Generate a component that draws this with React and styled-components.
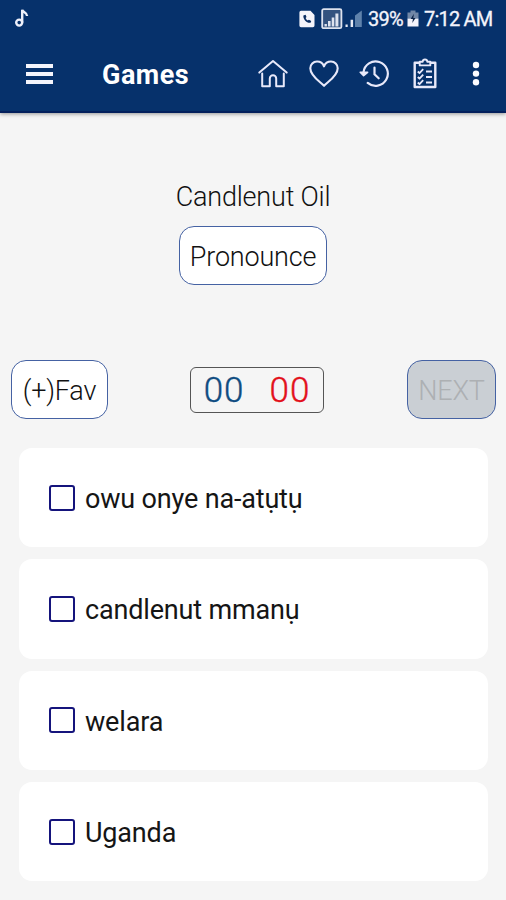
import React, { useState } from "react";
import styled, { createGlobalStyle } from "styled-components";

const options = ["owu onye na-atụtụ", "candlenut mmanụ", "welara", "Uganda"];

const App = () => {
    const [selected, setSelected] = useState(null);

    return (
        <Screen>
            <GlobalStyle />
            <Header>
                <StatusBar>
                    <NoteIcon />
                    <StatusGroup>
                        <CallIcon />
                        <SignalBoxIcon />
                        <SignalIcon />
                        <StatusText $width={34}>39%</StatusText>
                        <BatteryIcon />
                        <StatusText $width={68}>7:12 AM</StatusText>
                    </StatusGroup>
                </StatusBar>
                <Toolbar>
                    <MenuButton aria-label="Menu">
                        <MenuLine />
                        <MenuLine />
                        <MenuLine />
                    </MenuButton>
                    <Title>Games</Title>
                    <Actions>
                        <HomeIcon />
                        <HeartIcon />
                        <HistoryIcon />
                        <ClipboardIcon />
                        <DotsIcon />
                    </Actions>
                </Toolbar>
            </Header>
            <Question>
                <Word>Candlenut Oil</Word>
                <Button $width={148}>Pronounce</Button>
            </Question>
            <Controls>
                <Button $width={97}>(+)Fav</Button>
                <Score>
                    <Count $color="#0f4c81">00</Count>
                    <Count $color="#e3101b">00</Count>
                </Score>
                <Button $width={89} disabled>
                    NEXT
                </Button>
            </Controls>
            <Options>
                {options.map((option, index) => (
                    <Option key={option} onClick={() => setSelected(index)}>
                        <Checkbox $checked={selected === index} />
                        <Label>{option}</Label>
                    </Option>
                ))}
            </Options>
        </Screen>
    );
};

const NoteIcon = () => (
    <svg width="18" height="20" viewBox="0 0 18 20" fill="none" stroke="#eef0fa">
        <circle cx="6.2" cy="13.6" r="3" strokeWidth="2.4" />
        <path d="M9.2 13.6V.8c.6 2.8 4.8 2.3 4.9 6.2" strokeWidth="2.4" />
    </svg>
);

const CallIcon = () => (
    <svg width="16" height="18" viewBox="0 0 16 18">
        <path d="M2 .8h9.5L15.5 5v10.6a1.6 1.6 0 0 1-1.6 1.6H2A1.6 1.6 0 0 1 .4 15.6V2.4A1.6 1.6 0 0 1 2 .8z" fill="#f4f4fb" />
        <path
            d="M4.4 5.4c-.6 3.6 3.3 8 7.2 7.4l.6-1.9-2.3-1.2-1.1.9c-1.1-.6-1.8-1.4-2.2-2.5l.9-1-.9-2.3z"
            fill="#0a2d62"
        />
    </svg>
);

const SignalBoxIcon = () => (
    <svg width="22" height="22" viewBox="0 0 22 22">
        <rect x="1.2" y="1.2" width="19.2" height="19" rx="1.5" fill="#33527f" stroke="#dde2ee" strokeWidth="1.8" />
        <path d="M3.5 18.5V16h2.4v2.5zM7 18.5V13h2.6v5.5zM10.7 18.5v-9h2.6v9zM14.4 18.5v-13h3v13z" fill="#dde2ee" />
    </svg>
);

const SignalIcon = () => (
    <svg width="18" height="18" viewBox="0 0 18 18">
        <path d="M.5 17v-2.5h2.2V17zM5.6 17V9.8h2.5V17z" fill="#e6eaf4" />
        <path d="M10 17V5.5L16.8.5V17z" fill="#5f82ab" />
    </svg>
);

const BatteryIcon = () => (
    <svg width="12" height="17" viewBox="0 0 12 17">
        <path d="M3.5.5h5v2h3v6H.5v-6h3z" fill="#7187a6" />
        <path d="M.5 8.5h11v8H.5z" fill="#f4f4fb" />
        <path d="M6.9 3.8L3.7 9h2.2l-.6 4 3.2-5H6.3z" fill="#0b2347" />
    </svg>
);

const HomeIcon = () => (
    <svg width="32" height="32" viewBox="0 0 32 32" fill="none" stroke="#e8e9fa" strokeWidth="2" strokeLinecap="round" strokeLinejoin="round">
        <path d="M2.3 14.6L16 3l13.7 11.6" />
        <path d="M5.2 15.4v12.8h7.6v-7.800a3.2 3.2 0 0 1 6.4 0v7.800h7.600V15.4" />
    </svg>
);

const HeartIcon = () => (
    <svg width="32" height="32" viewBox="0 0 32 32" fill="none" stroke="#e8e9fa" strokeWidth="2.1" strokeLinejoin="round">
        <path d="M16 27.8C13 24.3 2.3 18.5 2.3 10.3 2.3 6.3 5.3 3.5 9 3.5c3.5 0 6 2.2 7 4.8 1-2.6 3.5-4.8 7-4.8 3.7 0 6.7 2.8 6.7 6.8C29.7 18.5 19 24.3 16 27.8z" />
    </svg>
);

const HistoryIcon = () => (
    <svg width="32" height="32" viewBox="0 0 32 32" fill="none" stroke="#e8e9fa" strokeWidth="2.2" strokeLinecap="round">
        <path d="M5.5 14.3a12.2 12.2 0 1 1 4.2 10.6" />
        <path d="M2.2 14.3l3.4 3.4 4-3.4z" fill="#e8e9fa" strokeWidth="1.6" strokeLinejoin="round" />
        <path d="M16.5 9.5v6.7l4.2 4.1" />
    </svg>
);

const ClipboardIcon = () => (
    <svg width="32" height="32" viewBox="0 0 32 32" fill="none" stroke="#e8e9fa" strokeWidth="1.9" strokeLinejoin="round">
        <path d="M10.5 4.8H5.7V29h20.6V4.8h-4.8" strokeWidth="2.4" />
        <path d="M10.7 7.4V3.7h3c.2-3 4.4-3 4.600 0h3v3.700z" />
        <path d="M8.8 13.5l1.7 1.7 3.7-4M8.8 19l1.7 1.7 3.7-4M8.8 24.5l1.7 1.7 3.7-4M17 13.5h6M17 19h6M17 24.5h6" strokeWidth="1.8" />
    </svg>
);

const DotsIcon = () => (
    <svg width="32" height="32" viewBox="0 0 32 32" fill="#fbfbff">
        <circle cx="16" cy="7" r="3.2" />
        <circle cx="16" cy="15.6" r="3.2" />
        <circle cx="16" cy="24.2" r="3.2" />
    </svg>
);

const GlobalStyle = createGlobalStyle`
    * {
        box-sizing: border-box;
    }
    body {
        margin: 0;
        background: #f5f5f5;
        font-family: Roboto, sans-serif;
    }
`;

const Screen = styled.main`
    height: 900px;
    overflow: hidden;
    background: #f5f5f5;
`;
const Header = styled.header`
    height: 113px;
    background: #06316b;
    border-bottom: 2px solid #04205c;
    box-shadow: 0 1px 4px rgba(0, 0, 0, 0.4);
`;
const StatusBar = styled.div`
    display: flex;
    align-items: center;
    justify-content: space-between;
    height: 37px;
    padding: 0 14px 0 13px;
`;
const StatusGroup = styled.div`
    display: flex;
    align-items: center;
    gap: 5px;
    svg {
        flex: none;
    }
    svg + svg {
        margin-left: 1px;
    }
    svg:nth-child(3) {
        margin: 0 0 0 -3px;
    }
`;
const StatusText = styled.span`
    width: ${({ $width }) => $width}px;
    font-size: 20px;
    letter-spacing: -0.8px;
    line-height: 38px;
    color: #f4f4fb;
    white-space: nowrap;
    -webkit-text-stroke: 0.3px #f4f4fb;
`;
const Toolbar = styled.nav`
    display: flex;
    align-items: center;
    height: 74px;
    padding: 0 14px 0 26px;
`;
const MenuButton = styled.button`
    display: flex;
    flex-direction: column;
    gap: 4px;
    width: 27px;
    padding: 0;
    border: none;
    background: none;
    cursor: pointer;
`;
const MenuLine = styled.span`
    height: 4px;
    background: #f4f5fc;
`;
const Title = styled.h1`
    margin: 2px auto 0 49px;
    font-size: 27px;
    font-weight: 700;
    letter-spacing: 0.5px;
    color: #fff;
`;
const Actions = styled.div`
    display: flex;
    gap: 18.8px;
`;
const Question = styled.section`
    display: flex;
    flex-direction: column;
    align-items: center;
    padding-top: 68px;
`;
const Word = styled.p`
    margin: 0 0 13px;
    font-size: 27px;
    font-weight: 300;
    letter-spacing: -0.2px;
    line-height: 32px;
    color: #111;
`;
const Button = styled.button`
    width: ${({ $width }) => $width}px;
    height: 59px;
    padding: 2px 0 0;
    border: 1.5px solid #4562a3;
    border-radius: 15px;
    background: #fff;
    font-family: inherit;
    font-size: 27px;
    font-weight: 300;
    letter-spacing: -0.2px;
    color: #111;
    cursor: pointer;
    &:disabled {
        background: #cacfd4;
        color: #adb0b3;
        cursor: default;
    }
`;
const Controls = styled.section`
    display: flex;
    align-items: center;
    justify-content: space-between;
    padding: 75px 10px 0 11px;
`;
const Score = styled.div`
    display: flex;
    align-items: center;
    justify-content: center;
    gap: 25px;
    width: 134px;
    height: 46px;
    margin-right: 1px;
    border: 1.5px solid #555;
    border-radius: 6px;
`;
const Count = styled.span`
    padding-top: 2px;
    font-size: 35px;
    font-weight: 300;
    letter-spacing: 1px;
    line-height: 44px;
    color: ${({ $color }) => $color};
    -webkit-text-stroke: 0.4px ${({ $color }) => $color};
`;
const Options = styled.section`
    display: flex;
    flex-direction: column;
    gap: 12px;
    padding: 29px 18px 0 19px;
`;
const Option = styled.div`
    display: flex;
    align-items: center;
    gap: 10px;
    height: 99.3px;
    padding-left: 30px;
    border-radius: 13px;
    background: #fff;
    cursor: pointer;
`;
const Checkbox = styled.span`
    width: 26px;
    height: 26px;
    border: 2px solid #15147c;
    border-radius: 3px;
    background: ${({ $checked }) => ($checked ? "#15147c" : "#fff")};
`;
const Label = styled.span`
    padding-top: 3px;
    font-size: 27px;
    letter-spacing: -0.17px;
    color: #151515;
`;

export default App;
